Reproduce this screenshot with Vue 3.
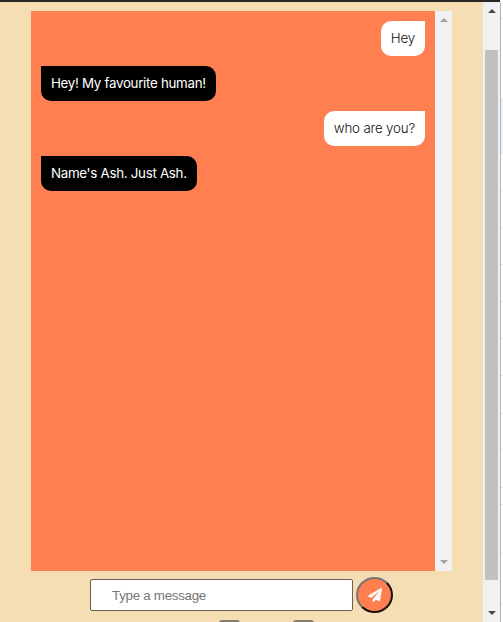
<script setup>
const messages = [
  { from: 'user', text: 'Hey' },
  { from: 'bot', text: 'Hey! My favourite human!' },
  { from: 'user', text: 'who are you?' },
  { from: 'bot', text: "Name's Ash. Just Ash." },
]
const rules = [18, 99, 153, 190, 227, 264, 301, 338, 375, 413, 449, 487, 504, 553, 603]
</script>

<template>
  <div class="window">
    <main class="page">
      <section class="chat">
        <div class="messages">
          <p v-for="(m, i) in messages" :key="i" class="bubble" :class="m.from">{{ m.text }}</p>
        </div>
        <div class="scrollbar inner">
          <svg width="8" height="4" viewBox="0 0 8 4"><path d="M0 4L4 0L8 4Z" /></svg>
          <svg width="8" height="4" viewBox="0 0 8 4"><path d="M0 0L4 4L8 0Z" /></svg>
        </div>
      </section>
      <form class="composer" @submit.prevent>
        <input type="text" placeholder="Type a message" />
        <button type="submit" aria-label="Send">
          <svg width="14" height="14" viewBox="0 0 512 512">
            <path d="M476 3.2L12.500 270.600c-18.100 10.400-15.800 35.600 2.200 43.200L121 358.400l287.300-253.200c5.500-4.900 13.300 2.600 8.600 8.300L176 407v80.500c0 23.600 28.500 32.900 42.500 15.800L282 426l124.600 52.200c14.200 6 30.400-2.900 33-18.200l72-432C515 7.800 493.300-6.800 476 3.200z" />
          </svg>
        </button>
      </form>
      <div class="controls"><span></span><span></span></div>
    </main>
    <aside class="scrollbar outer">
      <svg width="8" height="4" viewBox="0 0 8 4"><path d="M0 4L4 0L8 4Z" /></svg>
      <div class="thumb"></div>
      <svg width="8" height="4" viewBox="0 0 8 4"><path d="M0 0L4 4L8 0Z" /></svg>
    </aside>
    <div class="edge"></div>
    <svg class="margin" width="2" height="620" viewBox="0 2 2 620">
      <path class="tint" d="M0 99H2V153H0Z" />
      <path v-for="y in rules" :key="y" :d="`M0 ${y}H2V${y + 1}H0Z`" />
    </svg>
  </div>
</template>

<style>
body {
  margin: 0;
  overflow: hidden;
}
</style>

<style scoped>
.window {
  box-sizing: border-box;
  display: flex;
  width: 503px;
  height: 622px;
  overflow: hidden;
  background: linear-gradient(#2b2726, #2b2726) 0 0 / 500px 2px no-repeat #fff;
  padding-top: 2px;
}
.page {
  display: flex;
  flex-direction: column;
  box-sizing: border-box;
  width: 483px;
  padding: 9px 31px 0;
  background: #f5deb3;
}
.chat {
  display: flex;
  flex: none;
  height: 560px;
}
.messages {
  display: flex;
  flex-direction: column;
  box-sizing: border-box;
  flex: 1;
  gap: 10px;
  padding: 10px;
  background: #ff7f50;
}
.bubble {
  box-sizing: border-box;
  height: 35px;
  margin: 0;
  padding: 0 10px;
  font: 400 13.33px/35px Inter, sans-serif;
  white-space: nowrap;
}
.user {
  align-self: flex-end;
  border-radius: 10px 0 10px 10px;
  background: #fff;
  color: #111;
  font-weight: 300;
  letter-spacing: -0.17px;
}
.bot {
  align-self: flex-start;
  border-radius: 0 10px 10px 10px;
  background: #000;
  color: #fff;
  letter-spacing: -0.29px;
}
.scrollbar {
  display: flex;
  flex-direction: column;
  align-items: center;
  justify-content: space-between;
  box-sizing: border-box;
  width: 17px;
  background: #f1f1f1;
}
.scrollbar svg {
  display: block;
  flex: none;
}
.inner {
  padding: 7px 0 7px;
  fill: #a3a3a3;
}
.outer {
  justify-content: flex-start;
  padding-top: 7px;
  fill: #484848;
}
.thumb {
  flex: none;
  width: 13px;
  height: 530px;
  margin: 37px 0 31px;
  background: #c1c1c1;
}
.composer {
  display: flex;
  align-items: center;
  flex: none;
  gap: 3px;
  margin: 6px 0 0 59px;
}
input {
  box-sizing: border-box;
  width: 263px;
  height: 32px;
  margin: 0;
  padding: 0 21px;
  border: 1px solid #6d6252;
  border-radius: 2px;
  background: #fff;
  font: 13.33px "Liberation Sans", Arial, sans-serif;
  letter-spacing: -0.27px;
}
input::placeholder {
  color: #757575;
  opacity: 1;
}
button {
  display: flex;
  align-items: center;
  justify-content: center;
  box-sizing: border-box;
  width: 37px;
  height: 36px;
  padding: 0;
  border: 2px solid;
  border-color: #767676 #160c08 #160c08 #767676;
  border-radius: 50%;
  background: #ff7f50;
  fill: #fff;
}
.controls {
  display: flex;
  gap: 53px;
  margin: 7px 0 0 188px;
}
.controls span {
  width: 21px;
  height: 13px;
  border-radius: 3px;
  background: #857b6f;
}
.edge {
  width: 1px;
  background: #b5b5b5;
}
.margin {
  display: block;
  fill: #e3e6e8;
}
.tint {
  fill: #f1f7fb;
}
</style>
